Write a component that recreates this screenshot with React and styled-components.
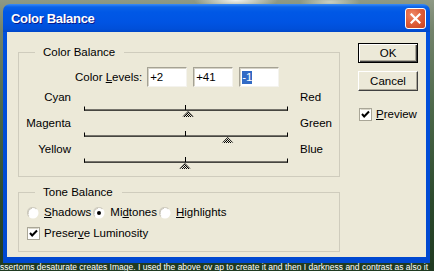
import React from 'react';
import styled, { createGlobalStyle } from 'styled-components';

const Global = createGlobalStyle`
  html, body {
    margin: 0;
    padding: 0;
  }
  body {
    width: 434px;
    height: 271px;
    overflow: hidden;
    font-family: "Liberation Sans", Arial, sans-serif;
  }
`;

const Page = styled.div`
  width: 434px;
  height: 271px;
  display: flex;
  flex-direction: column;
  overflow: hidden;
  background:
    radial-gradient(ellipse 42px 10px at 236px 0, #f2f3ee 0%, rgba(242, 243, 238, 0) 100%),
    radial-gradient(ellipse 30px 8px at 330px 2px, #c9cfc2 0%, rgba(201, 207, 194, 0) 100%),
    linear-gradient(to bottom, #8e9985 0px, #73836b 30px, #4c6849 110px, #2c4a2d 200px, #1f3a20 271px);
`;

const Window = styled.div`
  margin: 4px 0 0 3px;
  width: 427px;
  display: flex;
  flex-direction: column;
  border-radius: 7px 7px 0 0;
  overflow: hidden;
`;

const TitleBar = styled.div`
  height: 28px;
  display: flex;
  align-items: center;
  justify-content: space-between;
  padding: 1px 4px 0 8px;
  box-sizing: border-box;
  background: linear-gradient(
    to bottom,
    #3b8cf5 0px,
    #0a62e8 3px,
    #0058e6 8px,
    #0054e3 18px,
    #004fd9 25px,
    #0047c8 28px
  );
`;

const Title = styled.span`
  color: #fff;
  font-weight: bold;
  font-size: 13px;
  letter-spacing: -0.3px;
  text-shadow: 1px 1px 0 #0a1a8a;
`;

const CloseButton = styled.div`
  width: 21px;
  height: 21px;
  box-sizing: border-box;
  border: 1px solid #fff;
  border-radius: 3px;
  background: radial-gradient(circle at 35% 30%, #ef8a68 0%, #e0603c 45%, #c8411f 100%);
  display: flex;
  align-items: center;
  justify-content: center;
`;

const Frame = styled.div`
  padding: 0 4px 6px;
  background: linear-gradient(to bottom, #0050dd, #0048d0);
`;

const Body = styled.div`
  height: 225px;
  box-sizing: border-box;
  background: #ece9d8;
  display: flex;
  gap: 18px;
  padding: 11px 8px 0 11px;
  font-size: 11.5px;
  color: #000;
`;

const LeftCol = styled.div`
  width: 322px;
  display: flex;
  flex-direction: column;
  gap: 8px;
  padding-top: 2px;
`;

const Group = styled.fieldset`
  margin: 0;
  min-width: 0;
  padding: 0 0 ${p => p.$pb}px;
  border: 1px solid #cfccbd;
`;

const Legend = styled.legend`
  margin-left: 16px;
  padding: 0 9px 0 8px;
  line-height: 14px;
  font-size: 11.5px;
`;

const LevelsRow = styled.div`
  display: flex;
  align-items: center;
  gap: 6px;
  height: 20px;
  margin-top: 8px;
  padding-left: 56px;
`;

const LevelsLabel = styled.span`
  margin-right: -1px;
`;

const Field = styled.div`
  width: 40px;
  height: 20px;
  box-sizing: border-box;
  background: #fff;
  border: 1px solid;
  border-color: #a5a294 #f4f3ee #f4f3ee #a5a294;
  box-shadow: inset 1px 1px 0 #d6d3c6;
  padding: 0 0 0 2px;
  display: flex;
  align-items: center;
  line-height: 13px;
`;

const Selected = styled.span`
  background: #316ac5;
  color: #fff;
`;

const SliderRow = styled.div`
  display: grid;
  grid-template-columns: 52px 13px 205px 11px 1fr;
  grid-template-rows: 13px 13px;
  line-height: 13px;
  margin-top: ${p => p.$mt || 0}px;
`;

const SideLabel = styled.span`
  grid-row: 1;
  grid-column: ${p => (p.$right ? 5 : 1)};
  text-align: ${p => (p.$right ? 'left' : 'right')};
`;

const TrackBox = styled.div`
  grid-row: 2;
  grid-column: 3;
  display: flex;
`;

const OptionsRow = styled.div`
  display: flex;
  align-items: center;
  height: 13px;
  line-height: 13px;
  margin-top: ${p => p.$mt}px;
  padding-left: 8px;
`;

const Option = styled.label`
  display: flex;
  align-items: center;
  gap: ${p => p.$gap || 5}px;
  margin-right: 2px;
`;

const RightCol = styled.div`
  width: 60px;
  display: flex;
  flex-direction: column;
`;

const Button = styled.div`
  height: 20px;
  box-sizing: border-box;
  display: flex;
  align-items: center;
  justify-content: center;
  background: #ece9d8;
  border: 1px solid;
  border-color: ${p => (p.$default ? '#000' : '#fff #404040 #404040 #fff')};
  box-shadow: ${p =>
    p.$default
      ? 'inset 1px 1px 0 #fff, inset -1px -1px 0 #404040, inset -2px -2px 0 #aca899'
      : 'inset -1px -1px 0 #aca899'};
  margin-bottom: 8px;
`;

const PreviewRow = styled.div`
  display: flex;
  align-items: center;
  gap: 4px;
  margin-top: 9px;
  padding-left: 1px;
  line-height: 13px;
`;

const Caption = styled.div`
  flex: 1;
  background: #1f3a21;
  color: #fff;
  font-size: 8.5px;
  line-height: 8px;
  white-space: nowrap;
  overflow: hidden;
`;

function CloseIcon() {
  return (
    <svg width="11" height="11" viewBox="0 0 11 11">
      <path d="M1.5 1.5 L9.5 9.5 M9.5 1.5 L1.5 9.5" stroke="#fff" strokeWidth="2.2" strokeLinecap="square" />
    </svg>
  );
}

function Track({ value, id }) {
  const cx = ((value + 100) / 200) * 203 + 0.5;
  return (
    <svg width="205" height="13" viewBox="0 0 205 13">
      <defs>
        <pattern id={id} width="2" height="2" patternUnits="userSpaceOnUse">
          <rect width="1" height="1" fill="#000" />
          <rect x="1" y="1" width="1" height="1" fill="#000" />
        </pattern>
      </defs>
      <rect x="0" y="5.5" width="204" height="1.2" fill="#000" />
      <rect x="0" y="2.5" width="1" height="4" fill="#000" />
      <rect x="203" y="2.5" width="1" height="4" fill="#000" />
      <rect x="101" y="1" width="1" height="5" fill="#000" />
      <polygon points={`${cx - 5},13 ${cx},7.5 ${cx + 5},13`} fill={`url(#${id})`} />
      <polyline points={`${cx - 5},12.5 ${cx},7.5 ${cx + 5},12.5`} fill="none" stroke="#000" strokeWidth="0.8" />
    </svg>
  );
}

function Radio({ checked }) {
  return (
    <svg width="12" height="12" viewBox="0 0 12 12">
      <circle cx="6" cy="6" r="5.5" fill="#fff" />
      <path d="M2 9.5 A5 5 0 0 1 9.5 2" fill="none" stroke="#d2cfc2" strokeWidth="1.2" />
      <path d="M1.2 7 A5 5 0 0 1 5 1.2" fill="none" stroke="#bdb9aa" strokeWidth="0.8" />
      {checked && <circle cx="6" cy="6" r="2" fill="#000" />}
    </svg>
  );
}

function Checkbox() {
  return (
    <svg width="13" height="13" viewBox="0 0 13 13">
      <rect x="0.5" y="0.5" width="12" height="12" fill="#fff" stroke="#a9a697" />
      <path d="M1.5 1.5 H11.5" stroke="#d9d6c8" />
      <path d="M3 6 L5.2 8.5 L10 3.5" fill="none" stroke="#000" strokeWidth="2" />
    </svg>
  );
}

const sliders = [
  { left: 'Cyan', right: 'Red', value: 2 },
  { left: 'Magenta', right: 'Green', value: 41 },
  { left: 'Yellow', right: 'Blue', value: -1 }
];

export default function App() {
  return (
    <Page>
      <Global />
      <Window>
        <TitleBar>
          <Title>Color Balance</Title>
          <CloseButton>
            <CloseIcon />
          </CloseButton>
        </TitleBar>
        <Frame>
          <Body>
            <LeftCol>
              <Group $pb={7}>
                <Legend>Color Balance</Legend>
                <LevelsRow>
                  <LevelsLabel>
                    Color <u>L</u>evels:
                  </LevelsLabel>
                  <Field>+2</Field>
                  <Field>+41</Field>
                  <Field>
                    <Selected>-1</Selected>
                  </Field>
                </LevelsRow>
                {sliders.map((s, i) => (
                  <SliderRow key={s.left} $mt={i === 0 ? 4 : 0}>
                    <SideLabel>{s.left}</SideLabel>
                    <TrackBox>
                      <Track value={s.value} id={`dither${i}`} />
                    </TrackBox>
                    <SideLabel $right>{s.right}</SideLabel>
                  </SliderRow>
                ))}
              </Group>
              <Group $pb={11}>
                <Legend>Tone Balance</Legend>
                <OptionsRow $mt={7}>
                  <Option>
                    <Radio />
                    <span>
                      <u>S</u>hadows
                    </span>
                  </Option>
                  <Option>
                    <Radio checked />
                    <span>
                      Mi<u>d</u>tones
                    </span>
                  </Option>
                  <Option>
                    <Radio />
                    <span>
                      <u>H</u>ighlights
                    </span>
                  </Option>
                </OptionsRow>
                <OptionsRow $mt={8}>
                  <Option $gap={4}>
                    <Checkbox />
                    <span>
                      Preser<u>v</u>e Luminosity
                    </span>
                  </Option>
                </OptionsRow>
              </Group>
            </LeftCol>
            <RightCol>
              <Button $default>OK</Button>
              <Button>Cancel</Button>
              <PreviewRow>
                <Checkbox />
                <span>
                  <u>P</u>review
                </span>
              </PreviewRow>
            </RightCol>
          </Body>
        </Frame>
      </Window>
      <Caption>
        ssertoms desaturate creates Image. I used the above ov ap to create it and then I darkness and contrast as also it
      </Caption>
    </Page>
  );
}
